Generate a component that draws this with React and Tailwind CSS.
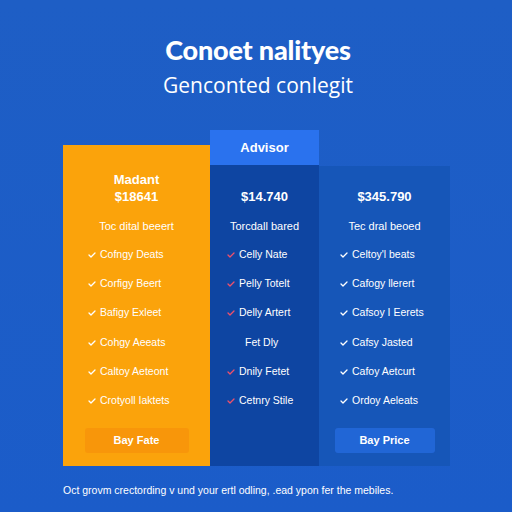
const Check = ({ color }) => (
    <svg width="8" height="6" viewBox="0 0 8 6" className="shrink-0">
        <polyline points="1,3 3,5 7,1" fill="none" stroke={color} strokeWidth="1.3" strokeLinecap="round" strokeLinejoin="round" />
    </svg>
);

const plans = [
    {
        name: "Madant",
        price: "$18641",
        desc: "Toc dital beeert",
        features: ["Cofngy Deats", "Corfigy Beert", "Bafigy Exleet", "Cohgy Aeeats", "Caltoy Aeteont", "Crotyoll Iaktets"],
        button: "Bay Fate",
    },
];

const App = () => {
    const orange = plans[0];
    const midFeatures = [
        { t: "Celly Nate", c: true },
        { t: "Pelly Totelt", c: true },
        { t: "Delly Artert", c: true },
        { t: "Fet Dly", c: false },
        { t: "Dnily Fetet", c: true },
        { t: "Cetnry Stile", c: true },
    ];
    const rightFeatures = ["Celtoy'l beats", "Cafogy llerert", "Cafsoy I Eerets", "Cafsy Jasted", "Cafoy Aetcurt", "Ordoy Aeleats"];

    return (
        <div
            className="w-[512px] h-[512px] bg-gradient-to-b from-[#1e5ec5] to-[#1b5cc9] text-white overflow-hidden"
            style={{ fontFamily: '"Liberation Sans", Arial, sans-serif' }}
        >
            {/* Header */}
            <div className="pt-[35px] flex flex-col items-center pl-[4px]">
                <h1 className="text-[27px] leading-[30px] font-bold tracking-[-0.2px]" style={{ fontFamily: 'Lato, "Liberation Sans", sans-serif', fontWeight: 900 }}>
                    Conoet nalityes
                </h1>
                <p className="mt-[8px] text-[21px] leading-[24px]" style={{ fontFamily: '"Open Sans", "Liberation Sans", sans-serif' }}>
                    Genconted conlegit
                </p>
            </div>

            {/* Pricing cards */}
            <div className="mt-[33px] pl-[63px] flex items-end">
                {/* Orange card */}
                <div className="w-[147px] h-[321px] bg-[#fba30b] flex flex-col pt-[27px]">
                    <div className="text-center text-[13px] leading-[16px] font-bold">{orange.name}</div>
                    <div className="text-center text-[13px] leading-[16px] font-bold mt-[1px]">{orange.price}</div>
                    <div className="text-center text-[11px] leading-[16px] mt-[13px]">{orange.desc}</div>
                    <ul className="mt-[6px] pl-[25px]">
                        {orange.features.map((f) => (
                            <li key={f} className="h-[29.3px] flex items-center gap-[4px] text-[10.5px]">
                                <Check color="#ffffff" />
                                {f}
                            </li>
                        ))}
                    </ul>
                    <div className="mt-[12px] mx-auto w-[104px] h-[25px] rounded-[3px] bg-[#f8960a] flex items-center justify-center text-[11px] font-bold">
                        {orange.button}
                    </div>
                </div>

                {/* Middle card */}
                <div className="w-[109px] flex flex-col">
                    <div className="h-[35px] bg-[#2a72ee] flex items-center justify-center text-[13px] font-bold">Advisor</div>
                    <div className="h-[301px] bg-[#0e45a2] flex flex-col pt-[24px]">
                        <div className="text-center text-[13px] leading-[16px] font-bold">$14.740</div>
                        <div className="text-center text-[11px] leading-[16px] mt-[13px]">Torcdall bared</div>
                        <ul className="mt-[6px] pl-[17px]">
                            {midFeatures.map((f) => (
                                <li key={f.t} className="h-[29.3px] flex items-center gap-[4px] text-[10.5px]">
                                    {f.c ? <Check color="#f0506a" /> : <span className="w-[14px]" />}
                                    {f.t}
                                </li>
                            ))}
                        </ul>
                    </div>
                </div>

                {/* Right card */}
                <div className="w-[131px] h-[300px] bg-[#1656b8] flex flex-col pt-[23px]">
                    <div className="text-center text-[13px] leading-[16px] font-bold">$345.790</div>
                    <div className="text-center text-[11px] leading-[16px] mt-[13px]">Tec dral beoed</div>
                    <ul className="mt-[6px] pl-[21px]">
                        {rightFeatures.map((f) => (
                            <li key={f} className="h-[29.3px] flex items-center gap-[4px] text-[10.5px]">
                                <Check color="#ffffff" />
                                {f}
                            </li>
                        ))}
                    </ul>
                    <div className="mt-[12px] mx-auto w-[100px] h-[25px] rounded-[3px] bg-[#2166d6] flex items-center justify-center text-[11px] font-bold">
                        Bay Price
                    </div>
                </div>
            </div>

            {/* Footer */}
            <p className="mt-[17px] pl-[63px] text-[10.5px] leading-[14px]">
                Oct grovm crectording v und your ertl odling, .ead ypon fer the mebiles.
            </p>
        </div>
    );
};

export default App;
